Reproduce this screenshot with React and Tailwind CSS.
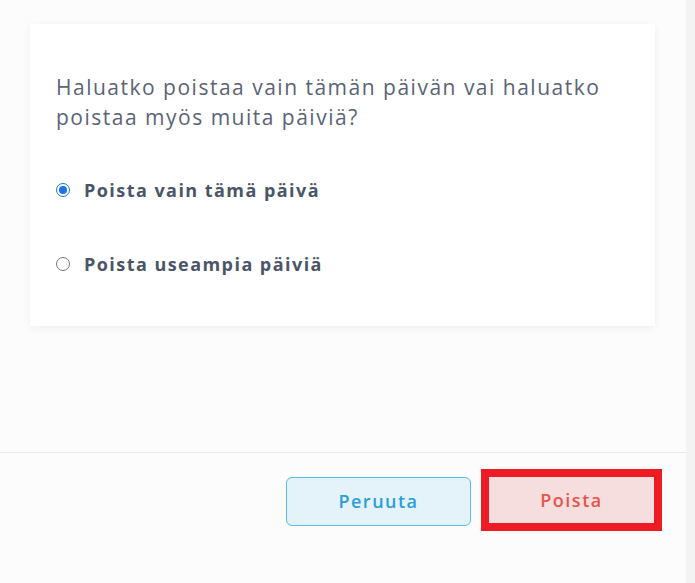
import React from "react";

export default function App() {
  return (
    <div className="flex w-[695px] h-[583px] bg-[#fcfcfd]" style={{ fontFamily: '"Open Sans", sans-serif' }}>
      <div className="flex flex-col w-[686px]">
        <div className="pt-[24px] px-[30px] pr-[31px]">
          <div className="bg-white h-[302px] shadow-[0_2px_8px_rgba(0,0,0,0.06)] pt-[48px] px-[26px]">
            <p className="text-[21px] leading-[30px] text-[#5b6374] tracking-[1.5px]">
              Haluatko poistaa vain tämän päivän vai haluatko poistaa myös muita päiviä?
            </p>
            <div className="mt-[46px] flex flex-col gap-[50px]">
              <label className="flex items-center gap-[14px]">
                <span className="w-[14px] h-[14px] rounded-full border-[1.5px] border-[#1a73e8] flex items-center justify-center">
                  <span className="w-[8px] h-[8px] rounded-full bg-[#1a73e8]" />
                </span>
                <span className="text-[18px] font-bold text-[#4b5568] leading-[24px] tracking-[1.45px]">Poista vain tämä päivä</span>
              </label>
              <label className="flex items-center gap-[14px]">
                <span className="w-[14px] h-[14px] rounded-full border border-[#767676] bg-white" />
                <span className="text-[18px] font-bold text-[#4b5568] leading-[24px] tracking-[1.45px]">Poista useampia päiviä</span>
              </label>
            </div>
          </div>
        </div>
        <div className="mt-[126px] border-t border-[#e6e9f0]" />
        <div className="flex items-start pt-[24px] pl-[286px] gap-[10px]">
          <button className="w-[185px] h-[49px] rounded-[6px] border-[1.5px] border-[#5bbde6] bg-[#e4f2fa] text-[#2a9fd8] text-[18px] font-semibold tracking-[1.5px]">
            Peruuta
          </button>
          <div className="-mt-[8px] border-[8px] border-[#ed1c24]">
            <button className="w-[165px] h-[46px] bg-[#f5dedd] text-[#e8544c] text-[18px] font-semibold tracking-[1.5px]">
              Poista
            </button>
          </div>
        </div>
      </div>
      <div className="w-[9px] h-full bg-[#f3f3f3]" />
    </div>
  );
}
